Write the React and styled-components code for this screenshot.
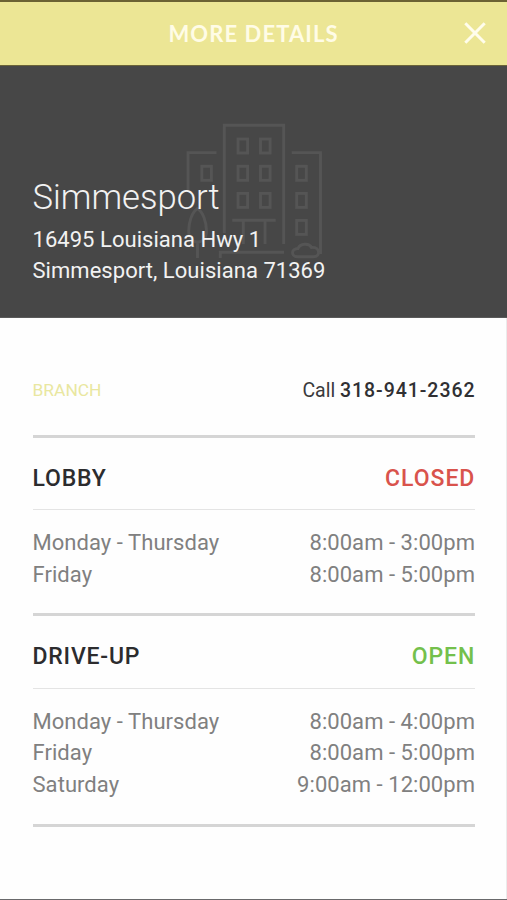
import React from "react";
import styled, { createGlobalStyle } from "styled-components";

const GlobalStyle = createGlobalStyle`
  *, *::before, *::after { box-sizing: border-box; }
  body { margin: 0; background: #fefefe; }
`;

const Screen = styled.div`
  display: flex;
  flex-direction: column;
  height: 900px;
  background: #fefefe;
  border-bottom: 1px solid #69696b;
  font-family: Roboto, "Liberation Sans", sans-serif;
  overflow: hidden;
`;

const TopBar = styled.header`
  display: grid;
  grid-template-columns: 64px 1fr 64px;
  align-items: center;
  height: 66px;
  flex: none;
  background: #ece695;
  border-top: 2px solid #6b6233;
  border-bottom: 1px solid #6b6438;
`;

const BarTitle = styled.h1`
  grid-column: 2;
  margin: 0;
  text-align: center;
  font: 700 22px/30px Lato, "Open Sans", sans-serif;
  letter-spacing: 1.1px;
  color: #fffce6;
`;

const CloseButton = styled.button`
  display: flex;
  align-items: center;
  justify-content: center;
  width: 64px;
  height: 60px;
  padding: 0 0 2px;
  border: 0;
  background: none;
  color: #fffdec;
`;

const Hero = styled.section`
  display: grid;
  height: 252px;
  flex: none;
  background: #474747;
  border-bottom: 1px solid #5a5a5a;
`;

const BuildingArt = styled.svg`
  grid-area: 1 / 1;
  margin: 54px 0 0 183px;
  color: #555555;
`;

const HeroText = styled.div`
  grid-area: 1 / 1;
  z-index: 1;
  padding: 111px 32px 0 32.5px;
  color: #f2f2f2;
`;

const BranchName = styled.h2`
  margin: 0 0 5.7px;
  font-size: 34.6px;
  line-height: 41px;
  font-weight: 300;
`;

const AddressLine = styled.div`
  font-size: 22px;
  line-height: 31.5px;
  letter-spacing: 0.04px;
`;

const Content = styled.main`
  display: flex;
  flex-direction: column;
  flex: 1;
  padding: 0 31px 0 32.5px;
  border-right: 1px solid #ebebeb;
`;

const ContactRow = styled.div`
  display: flex;
  justify-content: space-between;
  align-items: center;
  height: 116.5px;
  padding-top: 28px;
`;

const Kind = styled.span`
  font-size: 17.4px;
  color: #e9e7a0;
`;

const Phone = styled.span`
  font-size: 19.5px;
  color: #3a3a3c;
  margin-right: -0.5px;

  strong {
    font-weight: 500;
    letter-spacing: 0.95px;
    color: #303033;
  }
`;

const Schedule = styled.section`
  border-top: 3px solid #d5d5d5;
`;

const ScheduleHead = styled.div`
  display: flex;
  justify-content: space-between;
  align-items: center;
  height: 72.5px;
  padding-top: 9.5px;
  border-bottom: 1px solid #e4e4e4;
`;

const ScheduleTitle = styled.h3`
  margin: 0;
  font-size: 23px;
  font-weight: 500;
  letter-spacing: 0.8px;
  color: #2c2c2e;
`;

const Status = styled.span`
  font-size: 23px;
  font-weight: 500;
  letter-spacing: 0.95px;
  margin-right: -0.3px;
  color: ${(p) => (p.$open ? "#74c04c" : "#d9534c")};
`;

const Hours = styled.div`
  padding: 16.9px 0 22.9px;
`;

const HoursRow = styled.div`
  display: flex;
  justify-content: space-between;
  font-size: 22px;
  line-height: 31.7px;
  letter-spacing: 0.05px;
  color: #808080;
`;

const Closing = styled.div`
  height: 3px;
  background: #d5d5d5;
`;

function CloseIcon() {
  return (
    <svg width="24" height="24" viewBox="0 0 24 24" fill="none" stroke="currentColor" strokeWidth="3">
      <path d="M2.3 2.3 L21.7 21.7 M21.7 2.3 L2.3 21.7" />
    </svg>
  );
}

function Building() {
  const windows = [
    [238, 139], [260.5, 139],
    [238, 166.3], [260.5, 166.3],
    [238, 193.4], [260.5, 193.4],
    [201.8, 166.3],
    [296.7, 166.3], [296.7, 193.4], [296.7, 220.4],
  ];
  return (
    <BuildingArt width="144" height="144" viewBox="183 120 144 144" fill="none" stroke="currentColor" strokeWidth="2.9" aria-hidden="true">
      <path d="M224.3 233V125.3H283.7V244" />
      <path d="M216.5 152.6H188V190" />
      <path d="M291.7 152.6H320.5V254" />
      {windows.map(([x, y]) => (
        <rect key={`${x}-${y}`} x={x} y={y} width="9.6" height="14" />
      ))}
      <path d="M232.3 220.3H275.7M243.3 220V244M265 220V244" />
      <path d="M220.3 258V252.3H284" />
      <path d="M197.5 208.5C192 212 188.7 222 188.7 231C188.7 238 192 242 197.5 242C203 242 206.5 238 206.5 231C206.5 222 203 212 197.5 208.5ZM197.5 242V258" />
      <path d="M298 256.8C291 257 290.5 248.5 298 248.5C300 243.5 309 242.5 311.5 247.5C320 246.5 321 256.8 313.5 256.8Z" />
    </BuildingArt>
  );
}

function HoursBlock({ title, open, rows }) {
  return (
    <Schedule>
      <ScheduleHead>
        <ScheduleTitle>{title}</ScheduleTitle>
        <Status $open={open}>{open ? "OPEN" : "CLOSED"}</Status>
      </ScheduleHead>
      <Hours>
        {rows.map(([day, time]) => (
          <HoursRow key={day}>
            <span>{day}</span>
            <span>{time}</span>
          </HoursRow>
        ))}
      </Hours>
    </Schedule>
  );
}

export default function App() {
  return (
    <>
      <GlobalStyle />
      <Screen>
        <TopBar>
          <BarTitle>MORE DETAILS</BarTitle>
          <CloseButton aria-label="Close">
            <CloseIcon />
          </CloseButton>
        </TopBar>
        <Hero>
          <Building />
          <HeroText>
            <BranchName>Simmesport</BranchName>
            <AddressLine>16495 Louisiana Hwy 1</AddressLine>
            <AddressLine>Simmesport, Louisiana 71369</AddressLine>
          </HeroText>
        </Hero>
        <Content>
          <ContactRow>
            <Kind>BRANCH</Kind>
            <Phone>
              Call <strong>318-941-2362</strong>
            </Phone>
          </ContactRow>
          <HoursBlock
            title="LOBBY"
            open={false}
            rows={[
              ["Monday - Thursday", "8:00am - 3:00pm"],
              ["Friday", "8:00am - 5:00pm"],
            ]}
          />
          <HoursBlock
            title="DRIVE-UP"
            open
            rows={[
              ["Monday - Thursday", "8:00am - 4:00pm"],
              ["Friday", "8:00am - 5:00pm"],
              ["Saturday", "9:00am - 12:00pm"],
            ]}
          />
          <Closing />
        </Content>
      </Screen>
    </>
  );
}
